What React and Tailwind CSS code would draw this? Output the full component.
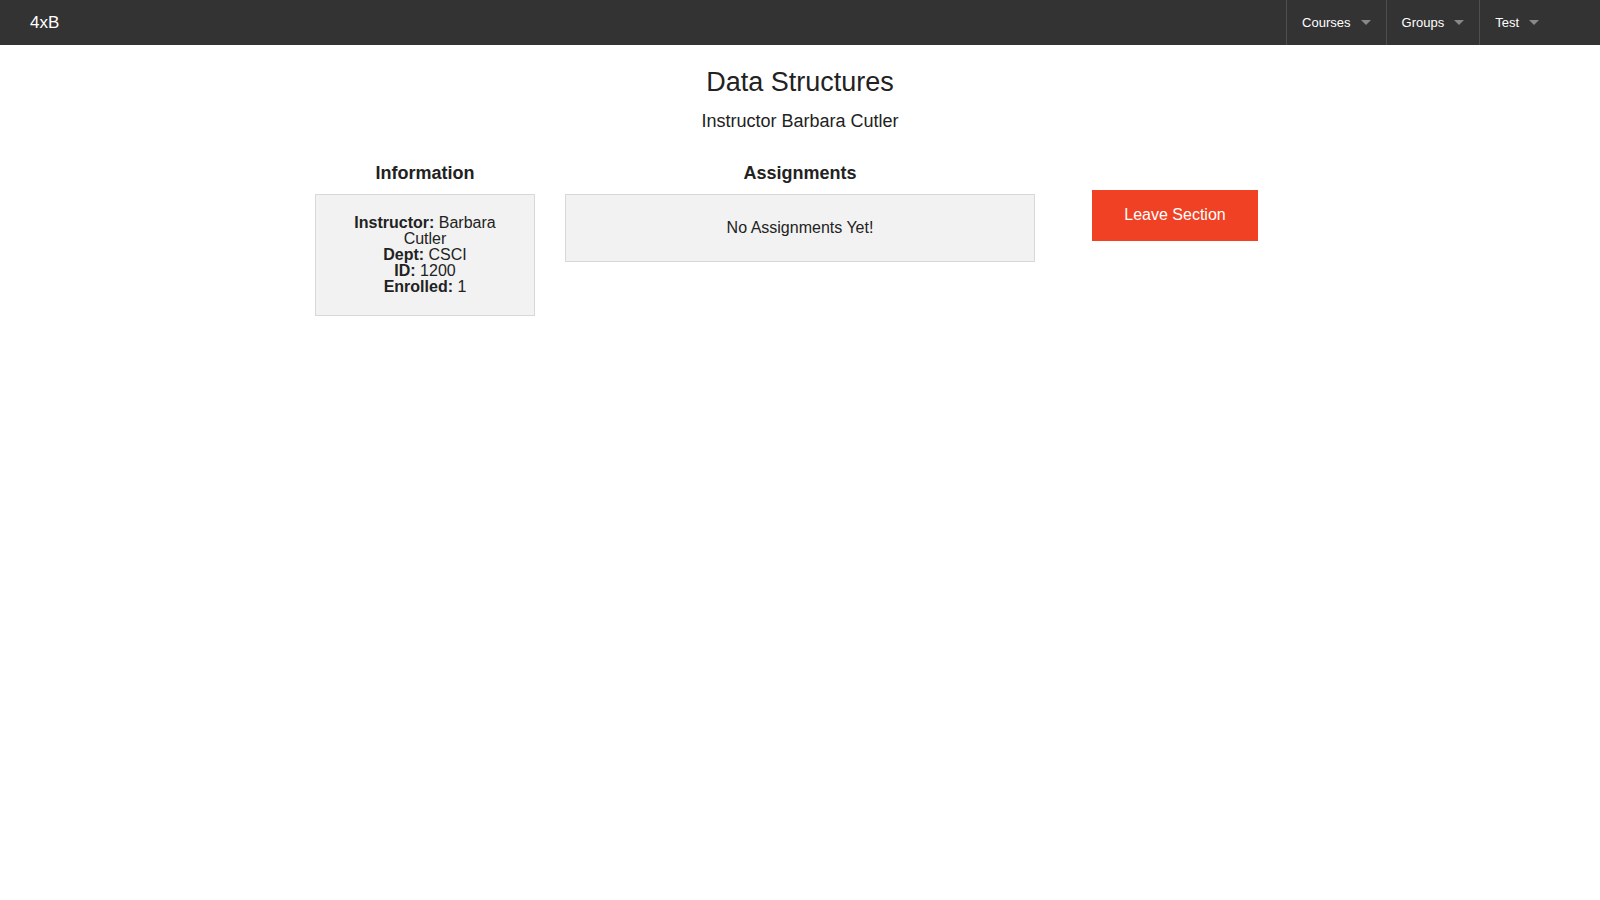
const navItems = ['Courses', 'Groups', 'Test'];

function TopBar() {
  return (
    <nav className="h-[45px] bg-[#333333] flex items-center justify-between">
      <a href="#" className="pl-[30px] text-[17px] text-white leading-[45px]">4xB</a>
      <ul className="flex h-full pr-[46px]">
        {navItems.map(item => (
          <li key={item} className="relative h-full border-l border-[#4e4e4e]">
            <a href="#" className="block pl-[15px] pr-[35px] text-[13px] leading-[45px] text-white">{item}</a>
            <span className="absolute right-[15px] top-[20px] w-0 h-0 border-x-[5px] border-t-[5px] border-x-transparent border-t-[#888888]" />
          </li>
        ))}
      </ul>
    </nav>
  );
}

export default function App() {
  return (
    <div className="min-h-[900px] bg-white text-[#222222] font-['Liberation_Sans',Arial,sans-serif]">
      <TopBar />
      <div className="pt-[19px] text-center">
        <h3 className="text-[27px] leading-[1.4] font-normal mb-[7px]">Data Structures</h3>
        <h5 className="text-[18px] leading-[1.4] font-normal">Instructor Barbara Cutler</h5>
      </div>

      <div className="w-[1000px] mx-auto flex items-start mt-[27px]">
        <div className="w-[250px] px-[15px]">
          <h5 className="text-[18px] leading-[1.4] font-bold text-center mb-[8px]">Information</h5>
          <div className="bg-[#f2f2f2] border border-[#d8d8d8] p-5 text-center text-[16px] leading-4">
            <div><b>Instructor:</b> Barbara Cutler</div>
            <div><b>Dept:</b> CSCI</div>
            <div><b>ID:</b> 1200</div>
            <div><b>Enrolled:</b> 1</div>
          </div>
        </div>

        <div className="w-[500px] px-[15px]">
          <h5 className="text-[18px] leading-[1.4] font-bold text-center mb-[8px]">Assignments</h5>
          <div className="bg-[#f2f2f2] border border-[#d8d8d8] p-5 text-center text-[16px] leading-[1.6]">
            No Assignments Yet!
          </div>
        </div>

        <div className="w-[250px] px-[15px] flex justify-center pt-[29px]">
          <button className="bg-[#f04124] text-white text-[16px] leading-[normal] px-8 pt-4 pb-[17px]">Leave Section</button>
        </div>
      </div>
    </div>
  );
}
